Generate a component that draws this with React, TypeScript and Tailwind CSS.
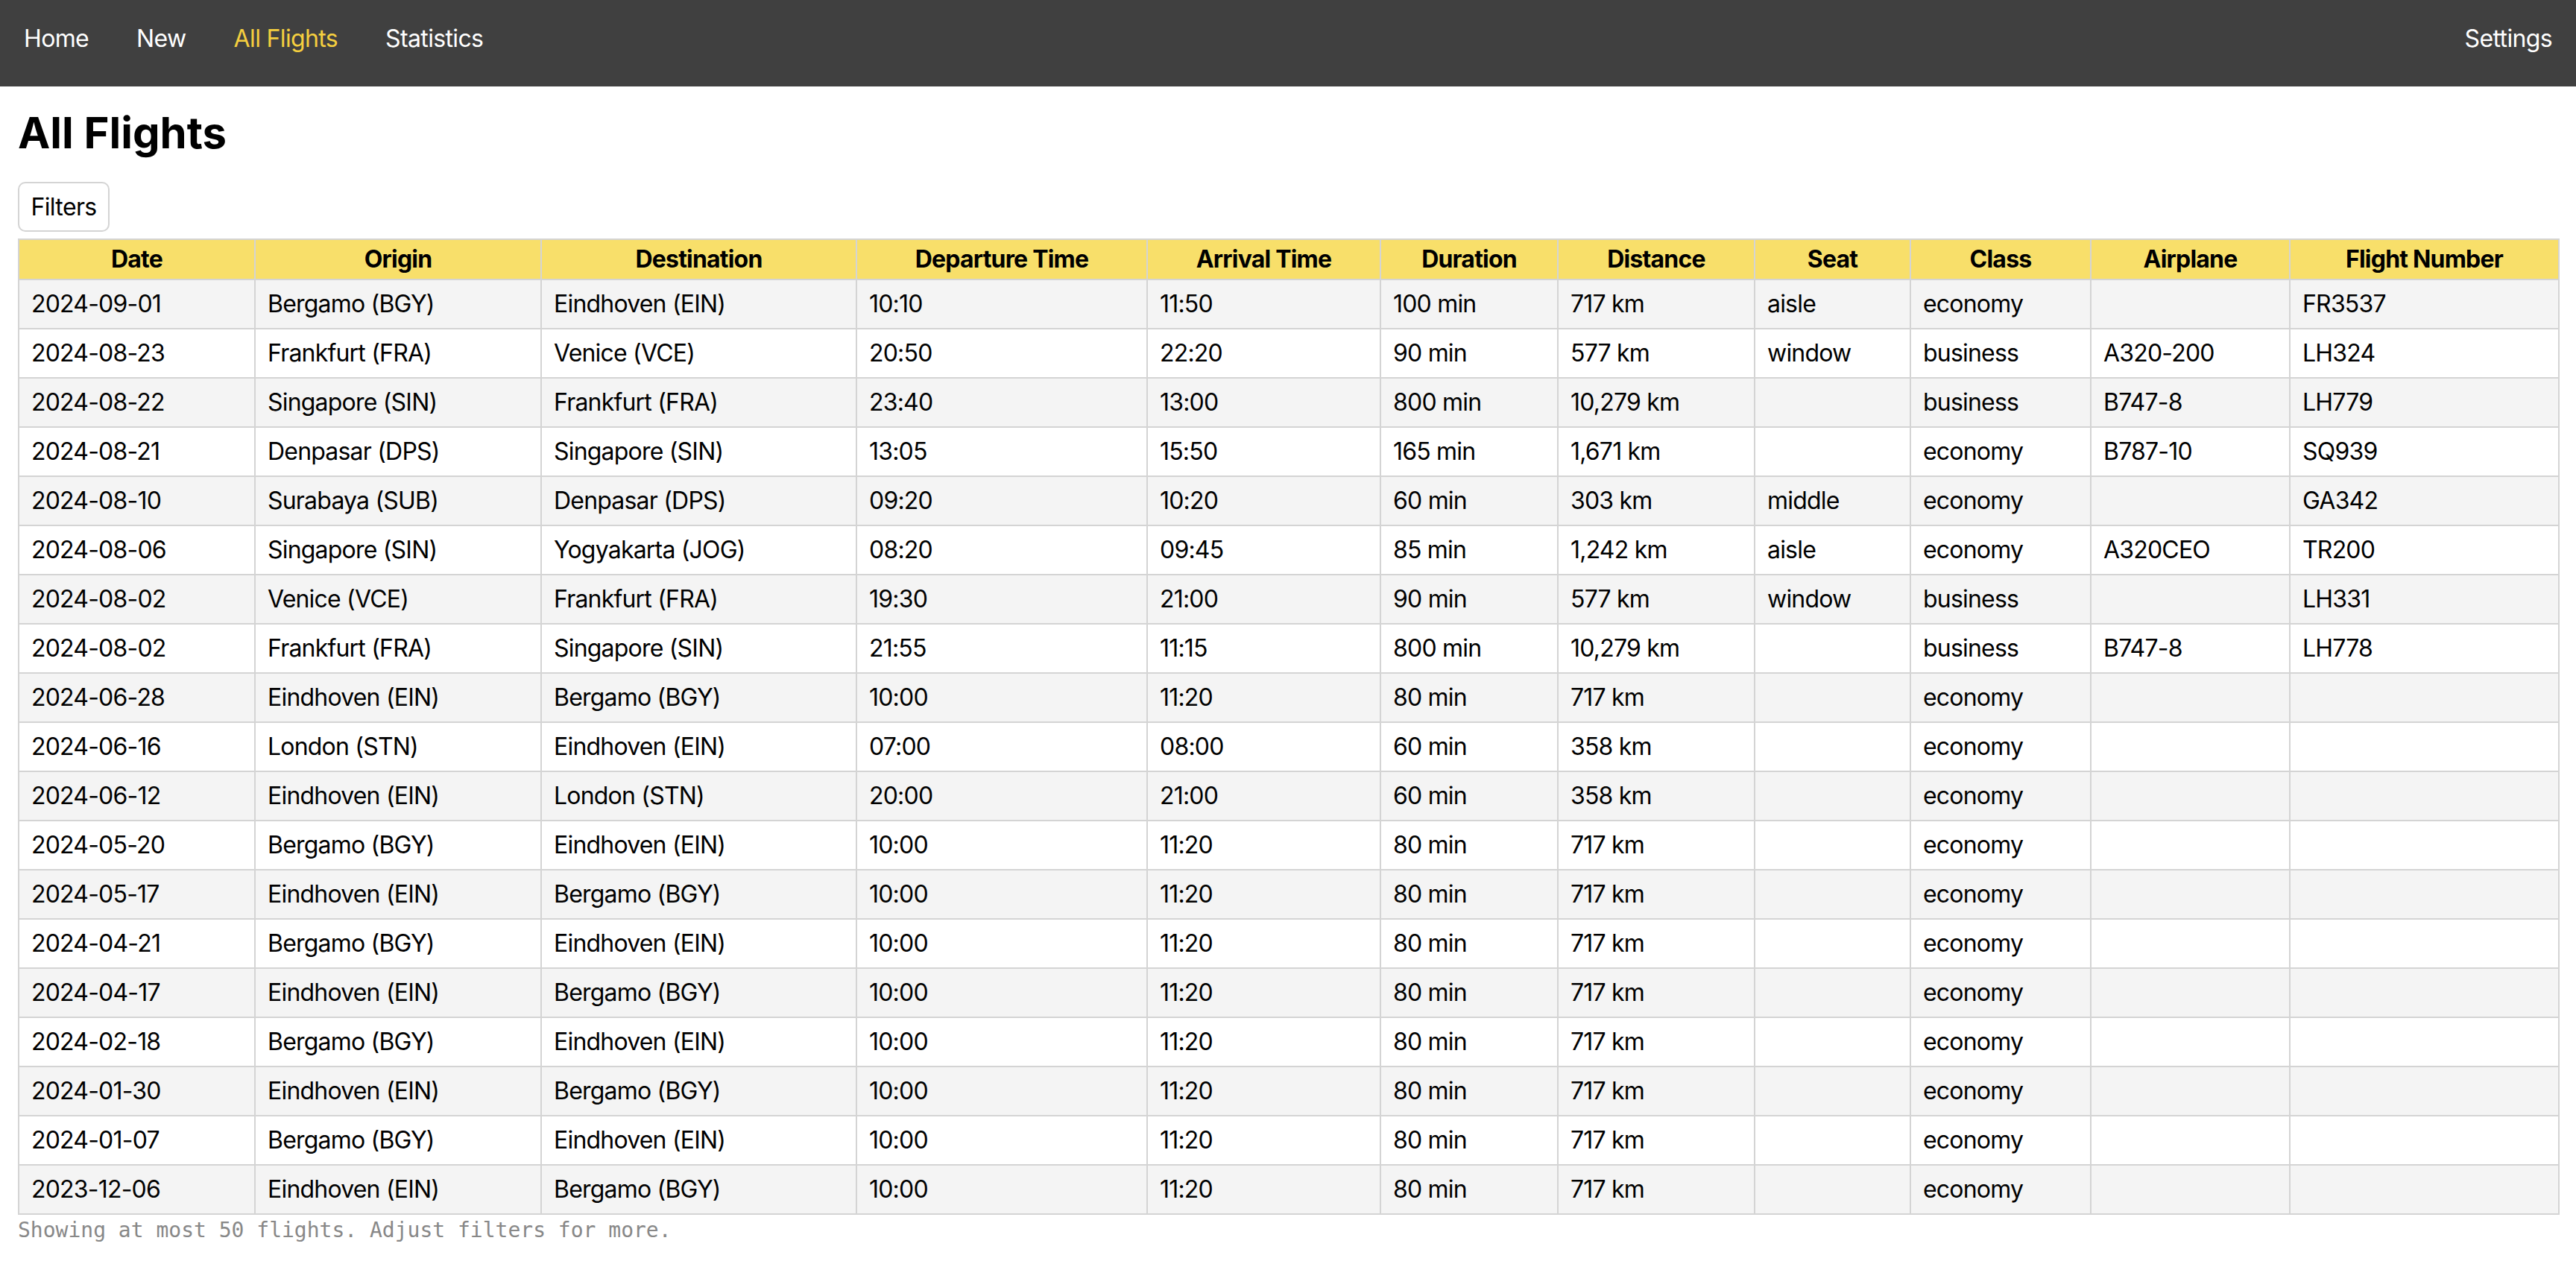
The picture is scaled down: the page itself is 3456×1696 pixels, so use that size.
import React from "react";

type Row = [string, string, string, string, string, string, string, string, string, string, string];

const rows: Row[] = [
  ["2024-09-01", "Bergamo (BGY)", "Eindhoven (EIN)", "10:10", "11:50", "100 min", "717 km", "aisle", "economy", "", "FR3537"],
  ["2024-08-23", "Frankfurt (FRA)", "Venice (VCE)", "20:50", "22:20", "90 min", "577 km", "window", "business", "A320-200", "LH324"],
  ["2024-08-22", "Singapore (SIN)", "Frankfurt (FRA)", "23:40", "13:00", "800 min", "10,279 km", "", "business", "B747-8", "LH779"],
  ["2024-08-21", "Denpasar (DPS)", "Singapore (SIN)", "13:05", "15:50", "165 min", "1,671 km", "", "economy", "B787-10", "SQ939"],
  ["2024-08-10", "Surabaya (SUB)", "Denpasar (DPS)", "09:20", "10:20", "60 min", "303 km", "middle", "economy", "", "GA342"],
  ["2024-08-06", "Singapore (SIN)", "Yogyakarta (JOG)", "08:20", "09:45", "85 min", "1,242 km", "aisle", "economy", "A320CEO", "TR200"],
  ["2024-08-02", "Venice (VCE)", "Frankfurt (FRA)", "19:30", "21:00", "90 min", "577 km", "window", "business", "", "LH331"],
  ["2024-08-02", "Frankfurt (FRA)", "Singapore (SIN)", "21:55", "11:15", "800 min", "10,279 km", "", "business", "B747-8", "LH778"],
  ["2024-06-28", "Eindhoven (EIN)", "Bergamo (BGY)", "10:00", "11:20", "80 min", "717 km", "", "economy", "", ""],
  ["2024-06-16", "London (STN)", "Eindhoven (EIN)", "07:00", "08:00", "60 min", "358 km", "", "economy", "", ""],
  ["2024-06-12", "Eindhoven (EIN)", "London (STN)", "20:00", "21:00", "60 min", "358 km", "", "economy", "", ""],
  ["2024-05-20", "Bergamo (BGY)", "Eindhoven (EIN)", "10:00", "11:20", "80 min", "717 km", "", "economy", "", ""],
  ["2024-05-17", "Eindhoven (EIN)", "Bergamo (BGY)", "10:00", "11:20", "80 min", "717 km", "", "economy", "", ""],
  ["2024-04-21", "Bergamo (BGY)", "Eindhoven (EIN)", "10:00", "11:20", "80 min", "717 km", "", "economy", "", ""],
  ["2024-04-17", "Eindhoven (EIN)", "Bergamo (BGY)", "10:00", "11:20", "80 min", "717 km", "", "economy", "", ""],
  ["2024-02-18", "Bergamo (BGY)", "Eindhoven (EIN)", "10:00", "11:20", "80 min", "717 km", "", "economy", "", ""],
  ["2024-01-30", "Eindhoven (EIN)", "Bergamo (BGY)", "10:00", "11:20", "80 min", "717 km", "", "economy", "", ""],
  ["2024-01-07", "Bergamo (BGY)", "Eindhoven (EIN)", "10:00", "11:20", "80 min", "717 km", "", "economy", "", ""],
  ["2023-12-06", "Eindhoven (EIN)", "Bergamo (BGY)", "10:00", "11:20", "80 min", "717 km", "", "economy", "", ""],
];

const headers = [
  "Date",
  "Origin",
  "Destination",
  "Departure Time",
  "Arrival Time",
  "Duration",
  "Distance",
  "Seat",
  "Class",
  "Airplane",
  "Flight Number",
];

const colClasses = [
  "w-[317px]",
  "w-[384px]",
  "w-[423px]",
  "w-[390px]",
  "w-[313px]",
  "w-[238px]",
  "w-[264px]",
  "w-[209px]",
  "w-[242px]",
  "w-[267px]",
  "w-[361px]",
];

const font = "font-['Inter',_'Liberation_Sans',_sans-serif]";

export default function App() {
  return (
    <div className={`min-h-screen bg-white text-black ${font}`}>
      <nav className="flex h-[116px] items-start justify-between bg-[#404040] pt-[32px]">
        <div className="flex">
          <a className="px-[32px] text-[32px] leading-[40px] tracking-[-0.02em] text-white">Home</a>
          <a className="px-[32px] text-[32px] leading-[40px] tracking-[-0.02em] text-white">New</a>
          <a className="px-[32px] text-[32px] leading-[40px] tracking-[-0.02em] text-[#f5cf3f]">All Flights</a>
          <a className="px-[32px] text-[32px] leading-[40px] tracking-[-0.02em] text-white">Statistics</a>
        </div>
        <a className="px-[32px] text-[32px] leading-[40px] tracking-[-0.02em] text-white">Settings</a>
      </nav>

      <main className="px-[24px]">
        <h1 className="mt-[27px] text-[58px] font-bold leading-[70px]">All Flights</h1>

        <button className="mt-[31px] h-[67px] w-[123px] rounded-[10px] border-2 border-[#d4d4d4] bg-white text-[32px] tracking-[-0.02em] text-black">
          Filters
        </button>

        <table className="mt-[9px] w-[3408px] table-fixed border-separate border-spacing-0 border-l-2 border-t-2 border-[#d4d4d4] text-[32px] tracking-[-0.025em]">
          <colgroup>
            {colClasses.map((c, i) => (
              <col key={i} className={c} />
            ))}
          </colgroup>
          <thead>
            <tr className="bg-[#f8df6a]">
              {headers.map((h) => (
                <th
                  key={h}
                  className="border-b-2 border-r-2 border-[#d4d4d4] px-[16px] text-center font-bold leading-[52px]"
                >
                  {h}
                </th>
              ))}
            </tr>
          </thead>
          <tbody>
            {rows.map((r, i) => (
              <tr key={i} className={i % 2 === 0 ? "bg-[#f4f4f4]" : "bg-white"}>
                {r.map((c, j) => (
                  <td
                    key={j}
                    className="whitespace-nowrap border-b-2 border-r-2 border-[#d4d4d4] px-[16px] text-left leading-[64px]"
                  >
                    {c}
                  </td>
                ))}
              </tr>
            ))}
          </tbody>
        </table>

        <p className="mt-[5px] font-['DejaVu_Sans_Mono',_'Liberation_Mono',_monospace] text-[28px] leading-[32px] text-[#888888]">
          Showing at most 50 flights. Adjust filters for more.
        </p>
      </main>
    </div>
  );
}
